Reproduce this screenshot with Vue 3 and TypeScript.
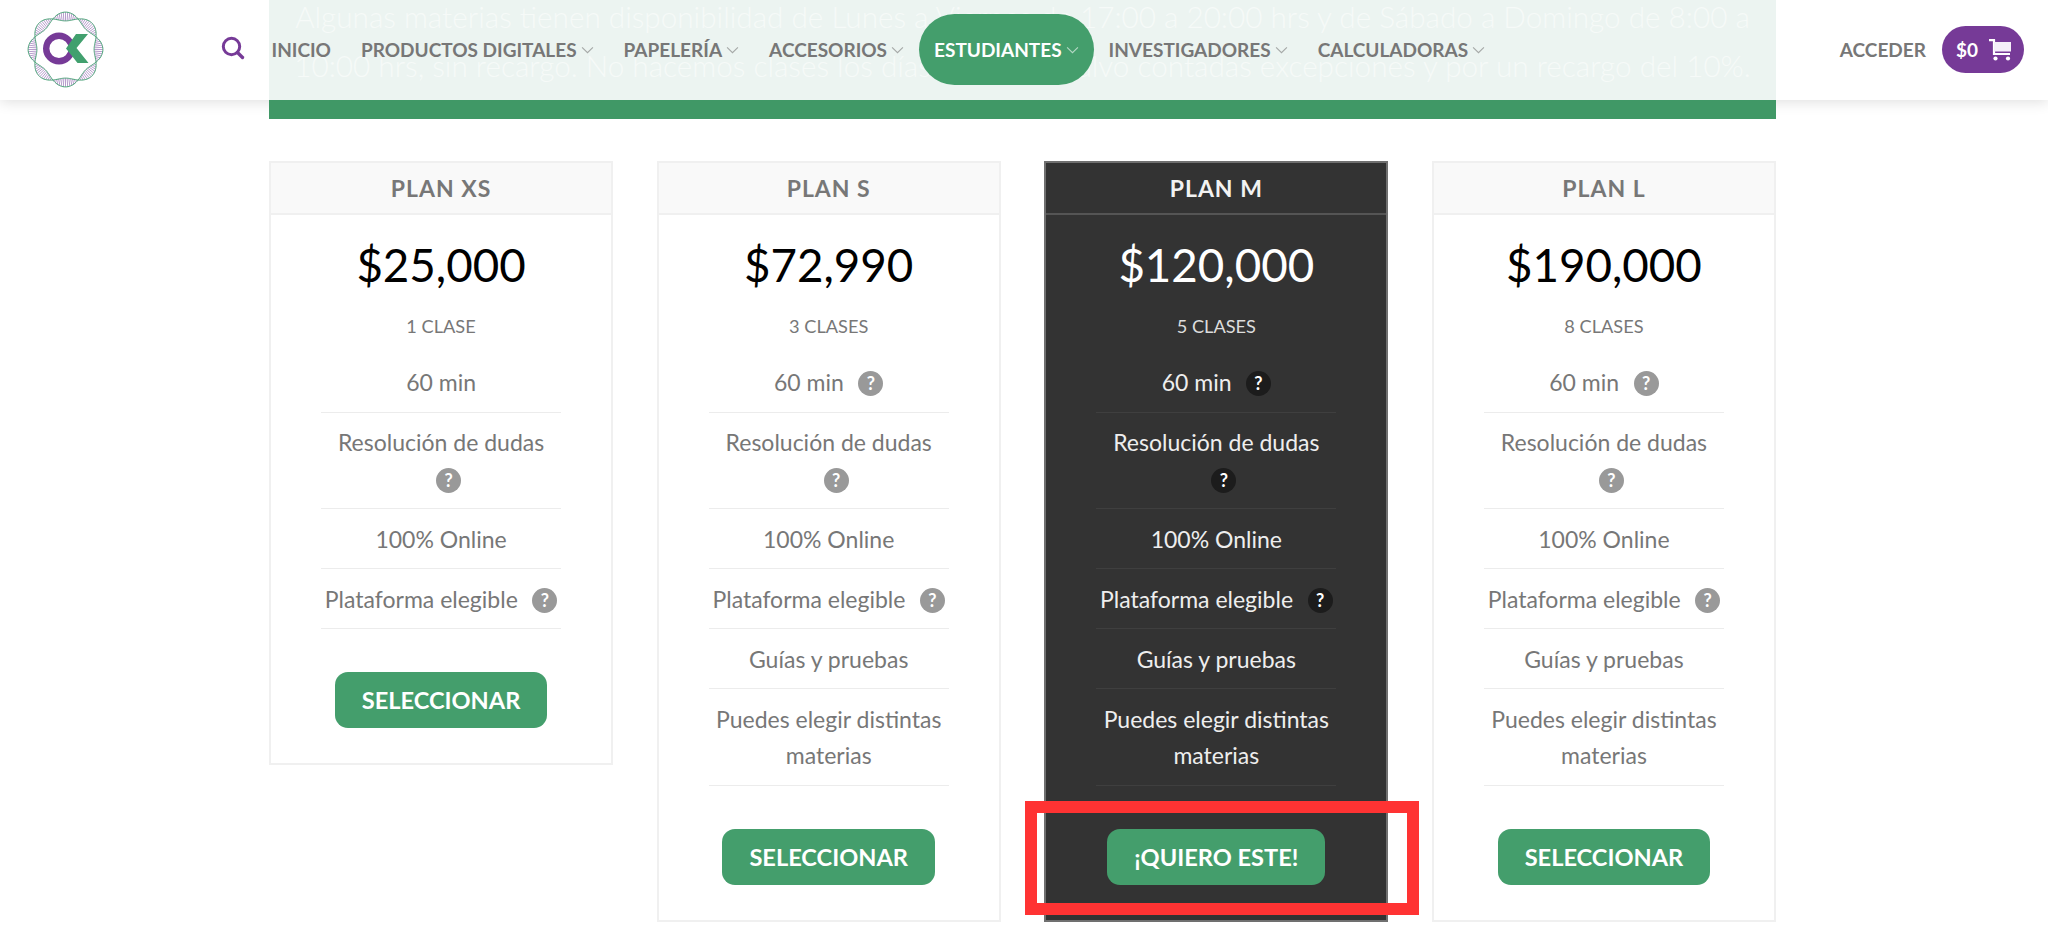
<script setup lang="ts">
interface Row { text: string; help?: boolean; wrapHelp?: boolean }
interface Plan { name: string; price: string; classes: string; rows: Row[]; cta: string; featured?: boolean }

const extra: Row[] = [{ text: 'Guías y pruebas' }, { text: 'Puedes elegir distintas materias' }]
const base = (first: boolean): Row[] => [
  { text: '60 min', help: first },
  { text: 'Resolución de dudas', help: true, wrapHelp: true },
  { text: '100% Online' },
  { text: 'Plataforma elegible', help: true },
]
const plans: Plan[] = [
  { name: 'PLAN XS', price: '$25,000', classes: '1 CLASE', rows: base(false), cta: 'SELECCIONAR' },
  { name: 'PLAN S', price: '$72,990', classes: '3 CLASES', rows: [...base(true), ...extra], cta: 'SELECCIONAR' },
  { name: 'PLAN M', price: '$120,000', classes: '5 CLASES', rows: [...base(true), ...extra], cta: '¡QUIERO ESTE!', featured: true },
  { name: 'PLAN L', price: '$190,000', classes: '8 CLASES', rows: [...base(true), ...extra], cta: 'SELECCIONAR' },
]
const nav = [
  { label: 'PRODUCTOS DIGITALES' },
  { label: 'PAPELERÍA' },
  { label: 'ACCESORIOS' },
  { label: 'ESTUDIANTES', active: true },
  { label: 'INVESTIGADORES' },
  { label: 'CALCULADORAS' },
]

const cx = 65.5
const cy = 49.5
const R = 33
const A = 4.4
const strand = (sign: number): string => {
  const pts: string[] = []
  for (let d = 0; d <= 360; d += 2) {
    const t = (d * Math.PI) / 180
    const r = R + sign * A * Math.cos(4 * t)
    pts.push(`${(cx + r * Math.sin(t)).toFixed(2)},${(cy - r * Math.cos(t)).toFixed(2)}`)
  }
  return pts.join(' ')
}
const rungs = Array.from({ length: 108 }, (_, i) => {
  const t = ((i * 10) / 3) * (Math.PI / 180)
  const a = A * Math.abs(Math.cos(4 * t))
  return {
    x1: cx + (R - a) * Math.sin(t),
    y1: cy - (R - a) * Math.cos(t),
    x2: cx + (R + a) * Math.sin(t),
    y2: cy - (R + a) * Math.cos(t),
  }
})
</script>

<template>
  <div class="page">
    <div class="bar-bg"></div>
    <main class="content">
      <section class="banner">
        <p>Algunas materias tienen disponibilidad de Lunes a Viernes de 17:00 a 20:00 hrs y de Sábado a Domingo de 8:00 a 10:00 hrs, sin recargo. No hacemos clases los días domingo, salvo contadas excepciones y por un recargo del 10%.</p>
      </section>
      <section class="plans">
        <article v-for="p in plans" :key="p.name" class="card" :class="{ featured: p.featured }">
          <h3 class="card-title">{{ p.name }}</h3>
          <div class="price">{{ p.price }}</div>
          <div class="classes">{{ p.classes }}</div>
          <ul class="rows">
            <li v-for="r in p.rows" :key="r.text" class="row">
              {{ r.text }}<template v-if="r.help"><span v-if="r.wrapHelp" class="break"></span><span class="help" :class="{ wrapped: r.wrapHelp }">?</span></template>
            </li>
          </ul>
          <a class="btn">{{ p.cta }}</a>
          <div v-if="p.featured" class="highlight"></div>
        </article>
      </section>
    </main>
    <header class="bar">
      <svg class="logo" viewBox="0 0 130 100" width="130" height="100" aria-label="OK">
        <line v-for="(l, i) in rungs" :key="i" :x1="l.x1" :y1="l.y1" :x2="l.x2" :y2="l.y2" stroke="#a583bf" stroke-width="0.8" />
        <polyline :points="strand(1)" fill="none" stroke="#4aa377" stroke-width="1" />
        <polyline :points="strand(-1)" fill="none" stroke="#4aa377" stroke-width="1" />
        <circle cx="59" cy="48.5" r="12.8" fill="none" stroke="#763a97" stroke-width="6.4" />
        <polygon points="76,34 88,34 76.5,48 88.5,63 77.5,63 66,48.5" fill="#41a06e" />
      </svg>
      <svg class="search" viewBox="0 0 24 24" width="24" height="24">
        <circle cx="10.5" cy="10.5" r="8.2" fill="none" stroke="#763a97" stroke-width="3" />
        <path d="M16.5 16.5 L21.5 21.5" stroke="#763a97" stroke-width="3.4" stroke-linecap="round" />
      </svg>
      <nav class="nav">
        <a class="link plain">INICIO</a>
        <a v-for="n in nav" :key="n.label" class="link" :class="{ active: n.active }">
          {{ n.label }}
          <svg class="chev" viewBox="0 0 12 7" width="13" height="8"><path d="M1 1 L6 6 L11 1" fill="none" stroke="currentColor" stroke-width="1" /></svg>
        </a>
      </nav>
      <a class="login">ACCEDER</a>
      <a class="cart">
        <span>$0</span>
        <svg viewBox="0 0 22 22" width="22" height="22">
          <path d="M0 1.2 H5 V15 H21" fill="none" stroke="#fff" stroke-width="2.2" />
          <rect x="5" y="3" width="17" height="9.5" fill="#f4eef8" />
          <circle cx="6.5" cy="19.5" r="2.1" fill="#fff" />
          <circle cx="19" cy="19.5" r="2.1" fill="#fff" />
        </svg>
      </a>
    </header>
  </div>
</template>

<style>
html, body { margin: 0; background: #fff; }
</style>

<style scoped>
.page {
  position: relative;
  width: 2048px;
  height: 939px;
  overflow: hidden;
  background: #fff;
  font-family: Lato, "Open Sans", sans-serif;
  color: #777;
}
.bar-bg {
  position: absolute;
  top: 0;
  left: 0;
  right: 0;
  height: 100px;
  background: #fff;
  box-shadow: 0 2px 13px rgba(0, 0, 0, 0.13);
}
.content {
  position: relative;
  margin-left: 269px;
  width: 1507px;
}
.banner {
  height: 100px;
  overflow: hidden;
  background: #ecf4f1;
  border-bottom: 19px solid #409866;
  text-align: center;
  color: #f6faf8;
  font-size: 29.7px;
  font-weight: 300;
  line-height: 49px;
}
.banner p { margin: -8px 20px 0; }
.plans {
  display: grid;
  grid-template-columns: repeat(4, 1fr);
  column-gap: 43.5px;
  align-items: start;
  margin-top: 42px;
}
.card {
  position: relative;
  border: 2px solid #f0f0f0;
  text-align: center;
  padding-bottom: 35px;
  background: #fff;
}
.card-title {
  margin: 0;
  height: 50px;
  line-height: 50px;
  font-size: 23px;
  font-weight: 700;
  letter-spacing: 1px;
  color: #777;
  background: #f9f9f9;
  border-bottom: 2px solid #f0f0f0;
}
.price {
  margin-top: 18.4px;
  font-size: 45.7px;
  line-height: 64px;
  color: #000;
}
.classes {
  margin-top: 13.3px;
  font-size: 18.2px;
  line-height: 30px;
  color: #777;
}
.rows {
  list-style: none;
  margin: 12.3px 50px 0;
  padding: 0;
}
.row {
  font-size: 23px;
  line-height: 36.4px;
  padding: 11.3px 0;
  border-bottom: 1.3px solid #ececec;
}
.break { display: block; height: 0; }
.help {
  display: inline-block;
  width: 25px;
  height: 25px;
  margin-left: 14.5px;
  border-radius: 50%;
  background: #999;
  color: #fff;
  font-size: 18px;
  font-weight: 700;
  line-height: 25px;
  text-align: center;
  vertical-align: 1px;
}
.help.wrapped { margin-left: 15px; }
.btn {
  display: inline-block;
  margin-top: 43px;
  padding: 0 27px;
  height: 56px;
  line-height: 56px;
  border-radius: 13px;
  background: #449e6c;
  color: #fff;
  font-size: 23.6px;
  font-weight: 700;
}
.featured {
  background: #333;
  border-color: #707070;
  color: #eee;
}
.featured .card-title {
  background: #333;
  color: #f2f2f2;
  border-color: #555;
}
.featured .price { color: #fff; }
.featured .classes { color: #ddd; }
.featured .row { border-color: #3f3f3f; color: #eee; }
.featured .help { background: #1c1c1c; }
.highlight {
  position: absolute;
  left: -21px;
  top: 638px;
  width: 394px;
  height: 114px;
  box-sizing: border-box;
  border: 12px solid #ff3333;
}
.bar {
  position: absolute;
  top: 0;
  left: 0;
  right: 0;
  height: 99px;
  display: flex;
  align-items: center;
}
.logo { flex: none; margin-top: 1px; }
.search { flex: none; margin: -3px 0 0 91px; }
.nav {
  display: flex;
  align-items: center;
  margin-left: 26.5px;
  font-size: 19px;
  font-weight: 700;
  color: #777;
}
.link {
  display: flex;
  align-items: center;
  gap: 4px;
  padding: 0 15px;
  white-space: nowrap;
}
.link.plain { padding-left: 0; }
.active {
  height: 71px;
  border-radius: 36px;
  background: #449e6c;
  color: #fff;
}
.chev { opacity: 0.6; }
.login {
  margin-left: auto;
  font-size: 19px;
  font-weight: 700;
  color: #777;
}
.cart {
  display: flex;
  align-items: center;
  gap: 11px;
  margin: 0 24px 0 16px;
  height: 47px;
  padding: 0 13px 0 14px;
  border-radius: 24px;
  background: #763a97;
  color: #fff;
  font-size: 19px;
  font-weight: 700;
}
</style>
